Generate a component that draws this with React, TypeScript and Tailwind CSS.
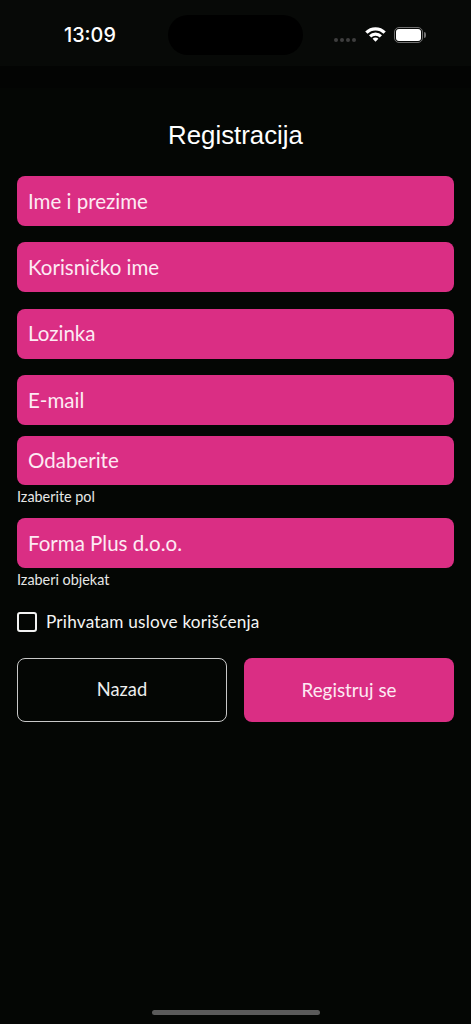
import React from "react";

const font = "font-['Lato','Noto_Sans',sans-serif]";

function Field({ text, mt, h = "h-[50px]" }: { text: string; mt: string; h?: string }) {
  return (
    <div className={`${mt} ${h} mx-[17px] flex items-center rounded-[8px] bg-[#da2e84] pl-[11px] text-[20.5px] font-normal text-[#fdeaf3] ${font}`}>
      {text}
    </div>
  );
}

function Hint({ text }: { text: string }) {
  return <div className={`mx-[17px] mt-[2px] h-[20px] text-[14.4px] leading-[20px] text-[#e6e6e6] ${font}`}>{text}</div>;
}

export default function App() {
  return (
    <div className="relative flex h-[1024px] w-[471px] flex-col overflow-hidden bg-[#040604]">
      <div className="relative flex h-[66px] shrink-0 items-start bg-[#070907]">
        <span className="ml-[64px] mt-[22px] text-[19.8px] font-medium leading-[26px] text-white font-['Inter',sans-serif]">13:09</span>
        <div className="absolute left-[168px] top-[15px] h-[40px] w-[135px] rounded-[20px] bg-black" />
        <div className="absolute left-[334px] top-[38px] flex gap-[2px]">
          {[0, 1, 2, 3].map((i) => (
            <div key={i} className="h-[4px] w-[4px] rounded-full bg-[#3e3e3e]" />
          ))}
        </div>
        <svg className="absolute left-[365px] top-[26px]" width="21" height="16" viewBox="0 0 21 16">
          <path d="M0.2 5.4 A14.6 14.6 0 0 1 20.8 5.4 L18.5 7.8 A11.2 11.2 0 0 0 2.5 7.8 Z" fill="#fff" />
          <path d="M4 9.2 A9.2 9.2 0 0 1 17 9.2 L14.8 11.5 A6 6 0 0 0 6.2 11.5 Z" fill="#fff" />
          <path d="M7.6 12.8 A4 4 0 0 1 13.4 12.8 L10.5 15.8 Z" fill="#fff" />
        </svg>
        <div className="absolute left-[394px] top-[27px] flex h-[16px] w-[29px] items-center justify-center rounded-[5px] border-[1.5px] border-[#707070]">
          <div className="h-[12px] w-[25px] rounded-[3px] bg-white" />
        </div>
        <div className="absolute left-[424px] top-[32px] h-[6px] w-[2px] rounded-r-[2px] bg-[#707070]" />
      </div>
      <div className="h-[22px] shrink-0 bg-[#030403]" />
      <h1 className="mt-[30px] h-[58px] text-center text-[25.8px] font-normal leading-[34px] text-white font-['Liberation_Sans',sans-serif]">
        Registracija
      </h1>
      <Field text="Ime i prezime" mt="mt-0" />
      <Field text="Korisničko ime" mt="mt-[16px]" />
      <Field text="Lozinka" mt="mt-[16.5px]" />
      <Field text="E-mail" mt="mt-[16.5px]" />
      <Field text="Odaberite" mt="mt-[11px]" h="h-[49px]" />
      <Hint text="Izaberite pol" />
      <Field text="Forma Plus d.o.o." mt="mt-[11px]" h="h-[50px]" />
      <Hint text="Izaberi objekat" />
      <div className="mx-[17px] mt-[20px] flex h-[24px] items-center">
        <div className="h-[20px] w-[20px] rounded-[3px] border-2 border-[#f2f2f2]" />
        <span className={`ml-[9px] text-[17.2px] tracking-[0.2px] text-[#f5f5f5] ${font}`}>Prihvatam uslove korišćenja</span>
      </div>
      <div className="mx-[17px] mt-[24px] flex gap-[17px]">
        <button className={`flex h-[64px] w-[210px] items-center justify-center rounded-[8px] border-[1.5px] border-[#c8c8c8] text-[18.3px] text-[#eeeeee] ${font}`}>Nazad</button>
        <button className={`flex h-[64px] w-[210px] items-center justify-center rounded-[8px] bg-[#da2e84] text-[18.8px] text-[#fdeaf3] ${font}`}>Registruj se</button>
      </div>
      <div className="absolute bottom-[9px] left-[152px] h-[5px] w-[168px] rounded-full bg-[#5a5a5a]" />
    </div>
  );
}
